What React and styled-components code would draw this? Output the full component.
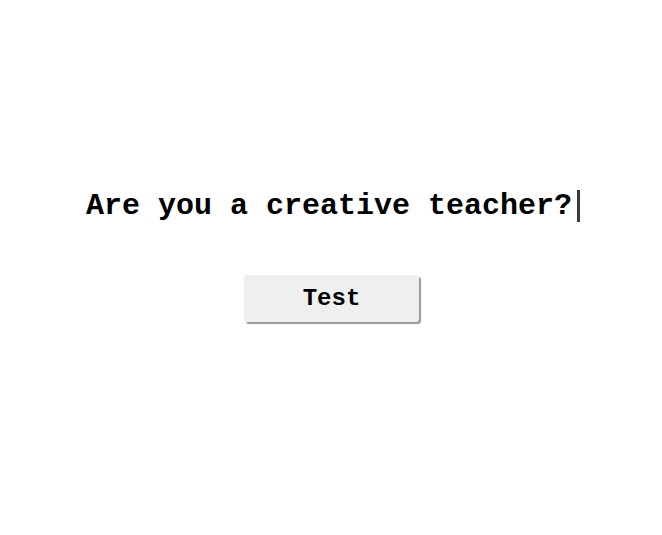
import React from "react";
import styled, { createGlobalStyle } from "styled-components";

const GlobalStyle = createGlobalStyle`
  html, body {
    margin: 0;
    padding: 0;
    background: #ffffff;
  }
`;

const Page = styled.div`
  width: 662px;
  height: 535px;
  display: flex;
  flex-direction: column;
  align-items: center;
  padding-top: 188px;
  box-sizing: border-box;
  font-family: "Liberation Mono", "Courier New", monospace;
`;

const Heading = styled.h1`
  margin: 0;
  display: flex;
  align-items: center;
  font-size: 30px;
  font-weight: 700;
  color: #000;
  line-height: 36px;
  padding-left: 4px;
`;

const Cursor = styled.span`
  display: inline-block;
  width: 3px;
  height: 32px;
  margin-left: 5px;
  background: #3a3a3a;
`;

const Button = styled.button`
  margin-top: 51px;
  margin-left: 1px;
  width: 175px;
  height: 47px;
  border: none;
  border-radius: 3px;
  background: #efefef;
  box-shadow: 2px 2px 1px #9a9a9a;
  font-family: "Liberation Mono", "Courier New", monospace;
  font-size: 24px;
  font-weight: 700;
  color: #000;
  cursor: pointer;
`;

function App() {
  return (
    <>
      <GlobalStyle />
      <Page>
        <Heading>
          Are you a creative teacher?
          <Cursor />
        </Heading>
        <Button>Test</Button>
      </Page>
    </>
  );
}

export default App;
